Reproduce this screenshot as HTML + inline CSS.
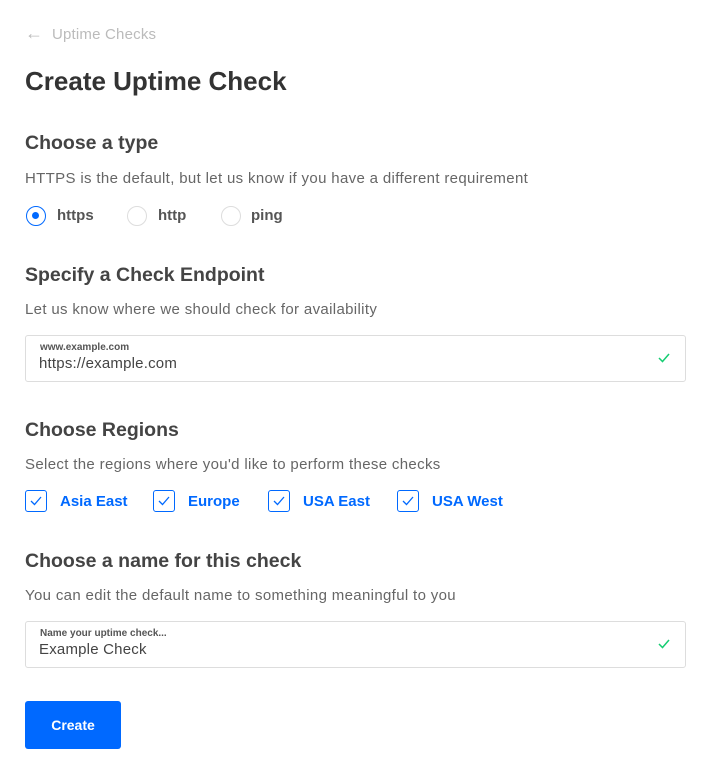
<!DOCTYPE html>
<html><head><style>
body{margin:0;background:#fff;font-family:"Liberation Sans",sans-serif;color:#333;width:718px;height:778px;position:relative;overflow:hidden}
.a{position:absolute;white-space:nowrap}
.h{font-size:19.5px;color:#444;font-weight:bold}
.p{font-size:15px;color:#666;letter-spacing:.34px}
.radio{position:absolute;width:20px;height:20px;border:1px solid #ddd;border-radius:50%;box-sizing:border-box}
.rl{font-size:15px;font-weight:bold;color:#555}
.cb{position:absolute;width:22px;height:22px;border:1.5px solid #0069ff;border-radius:3px;box-sizing:border-box}
.cl{font-size:15px;font-weight:bold;color:#0069ff}
.in{position:absolute;left:25px;width:661px;height:47px;border:1px solid #ddd;border-radius:3px;box-sizing:border-box}
.sm{position:absolute;left:14px;top:6px;font-size:10px;font-weight:bold;color:#555}
.val{position:absolute;left:13px;top:19px;font-size:15px;color:#444;letter-spacing:.2px}
</style></head><body>
<div class="a" style="left:25px;top:23px;font-size:15px;color:#bbb;letter-spacing:.2px"><span style="font-size:18px">&#8592;</span>&nbsp; Uptime Checks</div>
<div class="a" style="left:25px;top:66px;font-size:26px;color:#333;font-weight:bold">Create Uptime Check</div>
<div class="a h" style="left:25px;top:132px">Choose a type</div>
<div class="a p" style="left:25px;top:170px">HTTPS is the default, but let us know if you have a different requirement</div>
<div class="radio" style="left:26px;top:206px;border:1.5px solid #0069ff"><div style="position:absolute;left:5px;top:5px;width:7px;height:7px;border-radius:50%;background:#0069ff"></div></div>
<div class="a rl" style="left:57px;top:207px">https</div>
<div class="radio" style="left:127px;top:206px"></div>
<div class="a rl" style="left:158px;top:207px">http</div>
<div class="radio" style="left:221px;top:206px"></div>
<div class="a rl" style="left:251px;top:207px">ping</div>
<div class="a h" style="left:25px;top:264px">Specify a Check Endpoint</div>
<div class="a p" style="left:25px;top:301px">Let us know where we should check for availability</div>
<div class="in" style="top:335px"><div class="sm">www.example.com</div><div class="val">https://example.com</div>
<svg style="position:absolute;right:15px;top:17px" width="12" height="10"><path d="M1 5l3.5 3.5L11 1" fill="none" stroke="#15cd72" stroke-width="1.5"/></svg></div>
<div class="a h" style="left:25px;top:419px">Choose Regions</div>
<div class="a p" style="left:25px;top:456px">Select the regions where you'd like to perform these checks</div>
<div class="cb" style="left:25px;top:490px"><svg style="position:absolute;left:4px;top:5px" width="12" height="10"><path d="M1 5l3.5 3.5L11 1" fill="none" stroke="#0069ff" stroke-width="1.3"/></svg></div>
<div class="a cl" style="left:60px;top:493px">Asia East</div>
<div class="cb" style="left:153px;top:490px"><svg style="position:absolute;left:4px;top:5px" width="12" height="10"><path d="M1 5l3.5 3.5L11 1" fill="none" stroke="#0069ff" stroke-width="1.3"/></svg></div>
<div class="a cl" style="left:188px;top:493px">Europe</div>
<div class="cb" style="left:268px;top:490px"><svg style="position:absolute;left:4px;top:5px" width="12" height="10"><path d="M1 5l3.5 3.5L11 1" fill="none" stroke="#0069ff" stroke-width="1.3"/></svg></div>
<div class="a cl" style="left:303px;top:493px">USA East</div>
<div class="cb" style="left:397px;top:490px"><svg style="position:absolute;left:4px;top:5px" width="12" height="10"><path d="M1 5l3.5 3.5L11 1" fill="none" stroke="#0069ff" stroke-width="1.3"/></svg></div>
<div class="a cl" style="left:432px;top:493px">USA West</div>
<div class="a h" style="left:25px;top:550px">Choose a name for this check</div>
<div class="a p" style="left:25px;top:587px">You can edit the default name to something meaningful to you</div>
<div class="in" style="top:621px"><div class="sm">Name your uptime check...</div><div class="val">Example Check</div>
<svg style="position:absolute;right:15px;top:17px" width="12" height="10"><path d="M1 5l3.5 3.5L11 1" fill="none" stroke="#15cd72" stroke-width="1.5"/></svg></div>
<div style="position:absolute;left:25px;top:701px;width:96px;height:48px;background:#0069ff;border-radius:3px;color:#fff;font-size:14px;font-weight:bold;text-align:center;line-height:48px">Create</div>
</body></html>
